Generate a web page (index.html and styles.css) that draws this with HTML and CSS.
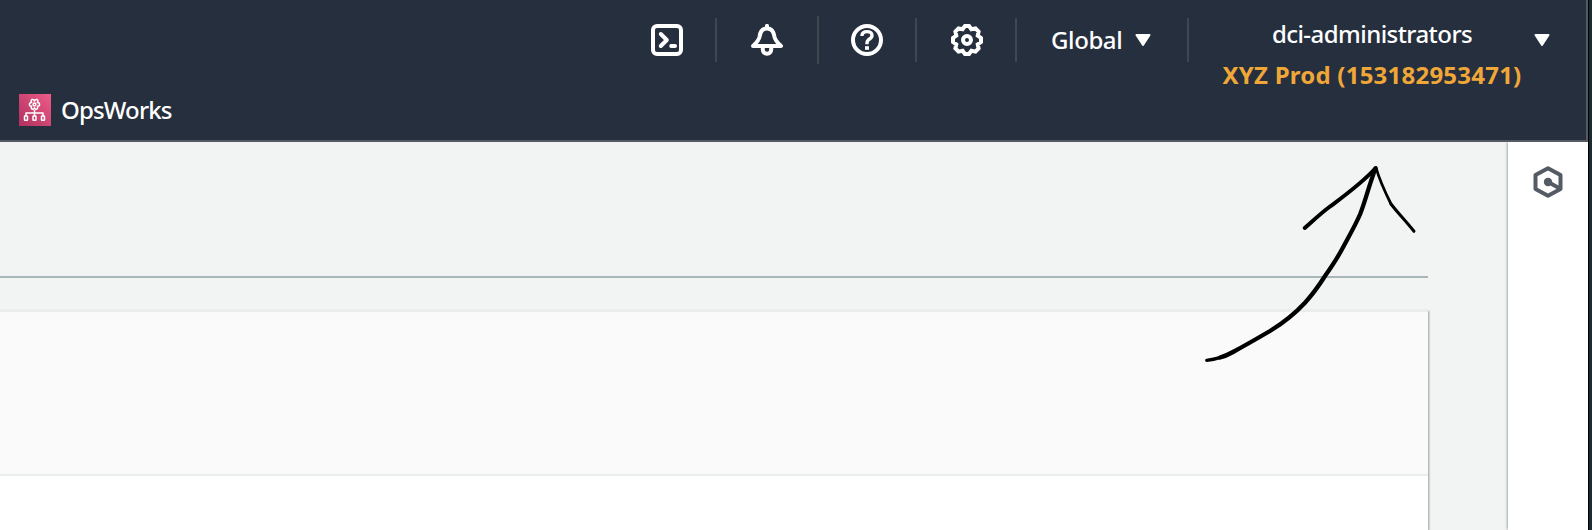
FILE: index.html
```html
<!DOCTYPE html>
<html lang="en">
<head>
<meta charset="utf-8">
<title>Console</title>
<link rel="stylesheet" href="styles.css">
</head>
<body>
<div class="window">
  <header class="header">
    <nav class="topnav">
      <svg class="icon" viewBox="0 0 16 16" fill="none" stroke="#fff" stroke-width="2"><rect x="1" y="1" width="14" height="14" rx="2"/><path d="M4.900 5 7.900 8l-3 3" stroke-linecap="round" stroke-linejoin="round"/><path d="M10.100 11h1.900" stroke-linecap="round"/></svg>
      <span class="divider"></span>
      <svg class="icon" viewBox="0 0 16 16" fill="none" stroke="#fff" stroke-width="2" stroke-linejoin="round"><path d="M1 11C3 9.200 3.900 8.200 4.300 6.300 4.600 3.800 5.500 2.200 8 2.200s3.400 1.600 3.700 4.100c.4 1.900 1.300 2.900 3.300 4.700z"/><path d="M8 .9v1" stroke-linecap="round"/><path d="M5.900 11.500v1.200c0 1.300.9 2.200 2.100 2.200s2.100-.9 2.100-2.200v-1.200"/></svg>
      <span class="divider divider-tall"></span>
      <svg class="icon" viewBox="0 0 16 16" fill="none" stroke="#fff" stroke-width="2"><circle cx="8" cy="8" r="7"/><path d="M5.500 6V5.800C5.500 4.500 6.500 3.800 8 3.800s2.500.8 2.500 2S9.400 7.400 8.700 7.900C8.200 8.300 8 8.700 8 9.500v.6" stroke-width="1.700"/><path d="M7 12h2" stroke-width="1.800"/></svg>
      <span class="divider"></span>
      <svg class="icon" viewBox="-8 -8 16 16" fill="none" stroke="#fff" stroke-width="2"><path d="M-1-7H1L2.220-5.360 4.240-5.800 5.800-4.240 5.360-2.220 7-1V1L5.360 2.220 5.800 4.240 4.240 5.800 2.220 5.360 1 7H-1L-2.220 5.360-4.240 5.800-5.800 4.240-5.360 2.220-7 1V-1L-5.360-2.220-5.800-4.240-4.240-5.800-2.220-5.360z"/><circle r="2"/></svg>
      <span class="divider"></span>
      <div class="region"><span class="region-name">Global</span><svg class="caret" viewBox="0 0 16 12"><path d="M1.500 1h13L8 11z" fill="#fff" stroke="#fff" stroke-width="2" stroke-linejoin="round"/></svg></div>
      <span class="divider"></span>
      <div class="account"><span class="role">dci-administrators</span><span class="account-name">XYZ Prod (153182953471)</span></div>
      <svg class="caret caret-account" viewBox="0 0 16 12"><path d="M1.500 1h13L8 11z" fill="#fff" stroke="#fff" stroke-width="2" stroke-linejoin="round"/></svg>
    </nav>
    <div class="favorites">
      <svg class="service-icon" viewBox="0 0 32 32"><defs><linearGradient id="pink" x1="0" y1="1" x2="1" y2="0"><stop offset="0" stop-color="#b0305c"/><stop offset="1" stop-color="#ee5c8a"/></linearGradient></defs><rect width="32" height="32" fill="url(#pink)"/><g fill="none" stroke="#fff" stroke-width="1.500" stroke-linejoin="round"><path d="M12.900 5.500Q14.800 5 15.500 7 16.200 5 18.100 5.500 19.500 6.600 18.400 8.500 20.500 8.600 20.600 10.500 20.500 12.300 18.400 12.300 19.300 14.200 17.900 15.100 16.100 15.700 15.500 13.800 14.900 15.700 13.100 15.100 11.700 14.200 12.600 12.300 10.500 12.300 10.400 10.500 10.500 8.600 12.600 8.500 11.500 6.600 12.900 5.500z"/><circle cx="15.500" cy="10.500" r="1.400"/><path d="M15.500 16V22M7 22v-3h17v3"/><rect x="5.500" y="22" width="3" height="4.200" rx=".5"/><rect x="14" y="22" width="3" height="4.200" rx=".5"/><rect x="22.500" y="22" width="3" height="4.200" rx=".5"/></g></svg>
      <span class="service-name">OpsWorks</span>
    </div>
  </header>
  <div class="body">
    <main class="content">
      <div class="tabs"></div>
      <section class="card"><div class="card-header"></div></section>
    </main>
    <aside class="sidebar">
      <svg class="hexagon" viewBox="0 0 30 34" fill="none" stroke="#545b64" stroke-width="4"><path d="M15 3.300 27.500 10v14L15 30.700 2.500 24v-14z" stroke-linejoin="round"/><path d="m15 17 11 6"/><circle cx="15" cy="17" r="4.200" fill="#545b64" stroke="none"/></svg>
    </aside>
  </div>
</div>
<svg class="arrow" viewBox="1190 150 250 220" fill="none" stroke="#000" stroke-linecap="round" stroke-linejoin="round"><path d="M1206.700 360.300C1215 359.500 1224 357 1233 352" stroke-width="3.200"/><path d="M1220 357.500C1224 356.500 1228 354.800 1233 352 1245 345.500 1258 338 1270 331 1283 323 1295 313.500 1305 302.700 1312 295 1319 285.500 1325 276 1331 267.500 1337 258.500 1341.600 250 1348 238 1355 226 1360 214.500 1365.500 201 1369 185 1375.500 168.500" stroke-width="4.300"/><path d="M1304.700 228c8-7 16-14.500 24-20.500 16-12 33-24 46.500-39" stroke-width="4"/><path d="M1376 167.500c4 14.500 10 26.500 15 36.500" stroke-width="2.800"/><path d="M1391 204c6 8 14 16 23 27.300" stroke-width="3"/></svg>
</body>
</html>
```
FILE: styles.css
```css
* { box-sizing: border-box; }
body {
  margin: 0;
  height: 530px;
  overflow: hidden;
  background: #1b2a30;
  font-family: "Noto Sans", "Open Sans", sans-serif;
  color: #fff;
}
.window {
  display: flex;
  flex-direction: column;
  width: 1589px;
  height: 530px;
  border-right: 1px solid #000;
}
.header {
  height: 142px;
  background: #262f3e;
  border-right: 2px solid #545b64;
  border-bottom: 2px solid #545b64;
}
.topnav {
  display: flex;
  align-items: flex-start;
  height: 94px;
  padding: 16px 0 0 651px;
}
.icon { flex: none; width: 32px; height: 32px; margin-top: 8px; }
.divider {
  flex: none;
  width: 2px;
  height: 44px;
  margin: 2px 34px 0 32px;
  background: #414750;
}
.divider-tall { height: 48px; margin: 0 32px 0 34px; }
.region { display: flex; width: 136px; height: 48px; }
.region-name { width: 84px; font-size: 24px; font-weight: 500; line-height: 48px; letter-spacing: -.4px; }
.caret { flex: none; width: 16px; height: 12px; margin-top: 18px; }
.region + .divider { margin-left: 0; }
.account { display: flex; flex-direction: column; align-items: center; width: 298px; white-space: nowrap; }
.role { font-size: 24px; font-weight: 500; line-height: 36px; letter-spacing: -.55px; }
.account-name { color: #f0a737; font-size: 24px; font-weight: 700; line-height: 46px; letter-spacing: .22px; }
.caret-account { margin-left: 13px; }
.favorites { display: flex; align-items: center; height: 32px; padding-left: 19px; gap: 10px; }
.service-icon { width: 32px; height: 32px; }
.service-name { font-size: 24px; font-weight: 500; line-height: 32px; letter-spacing: -.85px; }
.body { display: flex; flex: 1; background: #f2f4f4; }
.content { display: flex; flex-direction: column; width: 1428px; }
.tabs { height: 136px; border-bottom: 2px solid #aab7b8; }
.card {
  flex: 1;
  margin-top: 32px;
  border-top: 2px solid #eaeded;
  background: #fff;
  box-shadow: 1px 1px 2px rgba(0, 28, 36, .4);
}
.card-header { height: 164px; background: #fafafa; border-bottom: 2px solid #eaeded; }
.sidebar {
  width: 80px;
  margin-left: auto;
  padding: 23px 0 0 25px;
  background: #fff;
  box-shadow: 0 0 3px rgba(0, 28, 36, .6);
  clip-path: inset(0 0 0 -4px);
}
.hexagon { display: block; width: 30px; height: 34px; }
.arrow { position: absolute; left: 1190px; top: 150px; width: 250px; height: 220px; }
```
